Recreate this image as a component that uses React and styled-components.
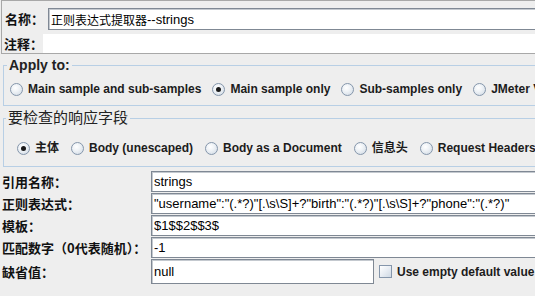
import React from 'react';
import styled, { createGlobalStyle } from 'styled-components';

const Global = createGlobalStyle`
  html, body { margin: 0; padding: 0; background: #eeeeee; overflow: hidden; }
  body { font-family: "Liberation Sans", "Noto Sans CJK SC", sans-serif; color: #000; }
  * { box-sizing: border-box; }
`;

const Page = styled.div`
  width: 560px;
  height: 296px;
  background: #eeeeee;
`;

const NamePanel = styled.div`
  margin-left: 1px;
  height: 54px;
  border: 1px solid #a8a8a8;
  border-right: none;
  padding: 7px 0 0 0;
  display: flex;
  flex-direction: column;
  gap: 4px;
`;

const PanelRow = styled.div`
  display: grid;
  grid-template-columns: ${p => p.$labelWidth}px 1fr;
  align-items: center;
  height: ${p => p.$h}px;
`;

const Label = styled.div`
  font-family: "Noto Sans CJK SC", sans-serif;
  font-weight: 700;
  font-size: 13px;
  line-height: 16px;
  white-space: nowrap;
  padding-left: ${p => p.$pl ?? 2}px;
  color: #111;
`;

const Field = styled.div`
  height: ${p => p.$h || 21}px;
  background: #fff;
  border: 1px solid #7f8894;
  border-right: ${p => (p.$closed ? '1px solid #7f8894' : 'none')};
  box-shadow: inset 1px 1px 0 #c4c9cf;
  display: flex;
  align-items: center;
  padding-left: 2px;
  font-family: "Liberation Sans", "Noto Sans CJK SC", sans-serif;
  font-size: 13px;
  white-space: nowrap;
  overflow: hidden;
  color: #000;
`;

const Cjk = styled.span`
  font-family: "Noto Sans CJK SC", sans-serif;
  font-size: 12px;
`;

const Memo = styled.div`
  height: 19px;
  background: #fff;
`;

const Group = styled.fieldset`
  margin: 3px 0 0 3px;
  padding: 0;
  min-width: 0;
  border: 1px solid #b8cfe5;
  border-right: none;
`;

const Legend = styled.legend`
  margin-left: ${p => p.$ml}px;
  padding: 0 2px;
  font-family: "Liberation Sans", "Noto Sans CJK SC", sans-serif;
  font-weight: ${p => (p.$bold ? 700 : 400)};
  font-size: ${p => p.$size}px;
  line-height: ${p => p.$lh}px;
  color: #222;
`;

const RadioRow = styled.div`
  display: flex;
  align-items: center;
  gap: ${p => p.$gap}px;
  padding: ${p => p.$pad};
  white-space: nowrap;
  overflow: hidden;
`;

const RadioItem = styled.label`
  display: flex;
  align-items: center;
  gap: 5px;
  height: 16px;
  font-family: "Liberation Sans", "Noto Sans CJK SC", sans-serif;
  font-weight: 700;
  font-size: 12px;
  line-height: 16px;
  color: #1c1c1c;
  flex-shrink: 0;
`;

const RadioDot = styled.span`
  width: 13px;
  height: 13px;
  border-radius: 50%;
  border: 1px solid #8596ab;
  background: radial-gradient(circle at 40% 35%, #ffffff 0%, #eef2f6 40%, #cdd7e2 100%);
  display: flex;
  align-items: center;
  justify-content: center;
  flex-shrink: 0;
  &::after {
    content: '';
    width: 5px;
    height: 5px;
    border-radius: 50%;
    background: ${p => (p.$on ? '#1a1a1a' : 'transparent')};
  }
`;

const Form = styled.div`
  margin-top: 4px;
  display: grid;
  grid-template-columns: 151px 1fr;
  row-gap: 1px;
  align-items: center;
`;

const DefaultCell = styled.div`
  display: flex;
  align-items: center;
  gap: 5px;
`;

const CheckBox = styled.span`
  width: 13px;
  height: 13px;
  border: 1px solid #8596ab;
  background: linear-gradient(135deg, #ffffff 0%, #e8edf3 50%, #cfd9e4 100%);
  flex-shrink: 0;
`;

const CheckText = styled.span`
  font-family: "Liberation Sans", sans-serif;
  font-weight: 700;
  font-size: 12px;
  color: #1c1c1c;
  white-space: nowrap;
`;

const Radio = ({ on, children }) => (
  <RadioItem>
    <RadioDot $on={on} />
    {children}
  </RadioItem>
);

export default function App() {
  return (
    <Page>
      <Global />
      <NamePanel>
        <PanelRow $labelWidth={46} $h={22}>
          <Label $pl={3}>名称：</Label>
          <Field $h={22}>
            <Cjk>正则表达式提取器</Cjk>--strings
          </Field>
        </PanelRow>
        <PanelRow $labelWidth={41} $h={19}>
          <Label $pl={2}>注释：</Label>
          <Memo />
        </PanelRow>
      </NamePanel>

      <Group>
        <Legend $ml={3} $bold $size={14} $lh={16}>Apply to:</Legend>
        <RadioRow $gap={11} $pad="8px 0 8px 6px">
          <Radio>Main sample and sub-samples</Radio>
          <Radio on>Main sample only</Radio>
          <Radio>Sub-samples only</Radio>
          <Radio>JMeter Variable</Radio>
        </RadioRow>
      </Group>

      <Group>
        <Legend $ml={2} $size={15} $lh={18}>要检查的响应字段</Legend>
        <RadioRow $gap={12} $pad="13px 0 10px 13px">
          <Radio on>主体</Radio>
          <Radio>Body (unescaped)</Radio>
          <Radio>Body as a Document</Radio>
          <Radio>信息头</Radio>
          <Radio>Request Headers</Radio>
        </RadioRow>
      </Group>

      <Form>
        <Label>引用名称：</Label>
        <Field>strings</Field>
        <Label>正则表达式：</Label>
        <Field>"username":"(.*?)"[.\s\S]+?"birth":"(.*?)"[.\s\S]+?"phone":"(.*?)"</Field>
        <Label>模板：</Label>
        <Field>$1$$2$$3$</Field>
        <Label>匹配数字（0代表随机）：</Label>
        <Field>-1</Field>
        <Label>缺省值：</Label>
        <DefaultCell>
          <Field $h={25} $closed style={{ width: 223 }}>null</Field>
          <CheckBox />
          <CheckText>Use empty default value</CheckText>
        </DefaultCell>
      </Form>
    </Page>
  );
}
